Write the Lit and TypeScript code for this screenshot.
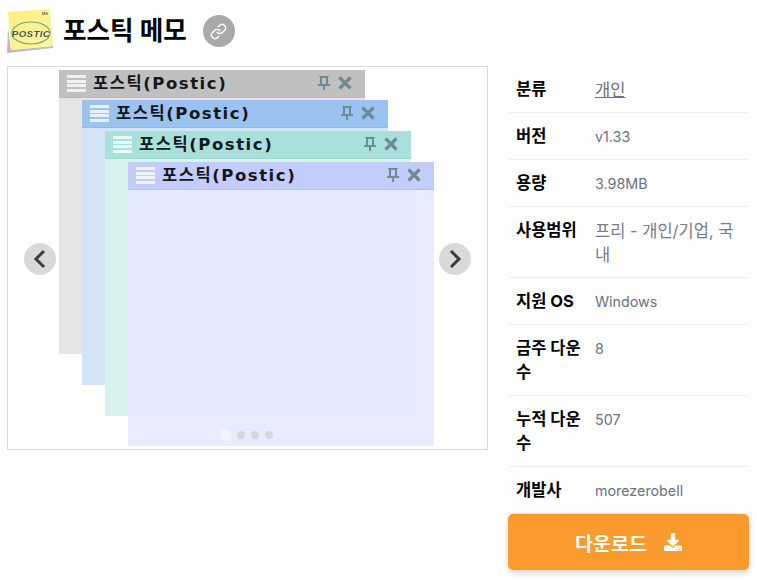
import { LitElement, html, css, svg } from "lit";
import { customElement } from "lit/decorators.js";

const windows = [
  { left: 51, top: 3, height: 284, bar: "#c0c0c0", edge: "#b9b9b9", body: "#e5e5e5" },
  { left: 74, top: 33, height: 285, bar: "#9ac3f0", edge: "#8cb8ea", body: "#d4e4f8" },
  { left: 97, top: 64, height: 285, bar: "#a8e0dc", edge: "#9ad8d2", body: "#d8f2ef" },
  { left: 120, top: 95, height: 284, bar: "#c2cdfb", edge: "#b3c0f6", body: "rgba(230,235,254,0.95)" },
];

const specs: { label: string; value: string; link?: boolean; ko?: boolean }[] = [
  { label: "분류", value: "개인", link: true, ko: true },
  { label: "버전", value: "v1.33" },
  { label: "용량", value: "3.98MB" },
  { label: "사용범위", value: "프리 - 개인/기업, 국내", ko: true },
  { label: "지원 OS", value: "Windows" },
  { label: "금주 다운수", value: "8" },
  { label: "누적 다운수", value: "507" },
  { label: "개발사", value: "morezerobell" },
];

const downloadIcon = svg`<path fill="currentColor" d="M216 0h80c13.3 0 24 10.7 24 24v168h87.7c17.8 0 26.7 21.5 14.1 34.1L269.7 378.3c-7.5 7.5-19.8 7.5-27.3 0L90.1 226.1c-12.6-12.6-3.7-34.1 14.1-34.1H192V24c0-13.3 10.7-24 24-24zm296 376v112c0 13.3-10.7 24-24 24H24c-13.3 0-24-10.7-24-24V376c0-13.3 10.7-24 24-24h146.7l49 49c20.1 20.1 52.5 20.1 72.6 0l49-49H488c13.3 0 24 10.7 24 24zm-124 88c0-11-9-20-20-20s-20 9-20 20 9 20 20 20 20-9 20-20zm64 0c0-11-9-20-20-20s-20 9-20 20 9 20 20 20 20-9 20-20z"/>`;

@customElement("app-root")
export class AppRoot extends LitElement {
  static styles = css`
    :host {
      display: block;
      height: 580px;
      overflow: hidden;
      background: #fff;
      font-family: Inter, "Noto Sans CJK KR", sans-serif;
      color: #000;
    }
    .page {
      padding: 8px 8px 0 7px;
    }
    .head {
      display: flex;
      align-items: center;
      height: 46px;
      margin-bottom: 12px;
    }
    .logo {
      width: 46px;
      height: 46px;
      margin-right: 10px;
      flex: none;
      filter: blur(0.4px);
    }
    h1 {
      margin: 0;
      font-size: 25.6px;
      font-weight: 700;
      line-height: 32px;
    }
    .share {
      width: 32px;
      height: 32px;
      margin-left: 16px;
      border-radius: 50%;
      background: #a9a9a9;
      color: #fff;
      display: flex;
      align-items: center;
      justify-content: center;
    }
    .share svg {
      width: 17px;
      height: 17px;
    }
    .main {
      display: grid;
      grid-template-columns: 481px 241px;
      column-gap: 20px;
      align-items: start;
    }
    .carousel {
      position: relative;
      height: 382px;
      border: 1px solid #d9d9d9;
      overflow: hidden;
      background: #fff;
    }
    .win {
      position: absolute;
      width: 306px;
      display: flex;
      flex-direction: column;
    }
    .bar {
      height: 28px;
      box-sizing: border-box;
      border-bottom: 1px solid;
      display: flex;
      align-items: center;
      padding: 0 13px 0 8px;
      flex: none;
    }
    .stripes {
      width: 19px;
      height: 18px;
      margin-right: 7px;
      background: repeating-linear-gradient(rgba(255, 255, 255, 0.78) 0 3px, transparent 3px 4.6px);
      flex: none;
    }
    .bar-title {
      font-family: "DejaVu Sans", "Noto Sans CJK KR", sans-serif;
      font-size: 16.5px;
      font-weight: 700;
      letter-spacing: 1.55px;
      line-height: 22px;
      color: #16161e;
      white-space: nowrap;
      flex: 1;
    }
    .bar svg {
      flex: none;
      color: #708a96;
      margin-bottom: 1px;
    }
    .pin {
      margin-right: 8px;
    }
    .body {
      flex: 1;
    }
    .nav {
      position: absolute;
      top: 176px;
      width: 32px;
      height: 32px;
      border-radius: 50%;
      background: #d9d9d9;
      color: #3c3c3c;
      display: flex;
      align-items: center;
      justify-content: center;
    }
    .prev {
      left: 16px;
    }
    .next {
      right: 16px;
    }
    .dots {
      position: absolute;
      left: 212px;
      bottom: 8px;
      display: flex;
      align-items: center;
      gap: 6px;
    }
    .dots i {
      width: 8px;
      height: 8px;
      border-radius: 50%;
      background: #d6d6dc;
    }
    .dots i.on {
      width: 12px;
      height: 12px;
      margin-right: -1px;
      background: #f4f6ff;
    }
    dl {
      margin: 0;
    }
    .row {
      display: grid;
      grid-template-columns: 72px 1fr;
      column-gap: 7px;
      padding: 11px 8px;
      border-bottom: 1px solid #eceef3;
      line-height: 24px;
    }
    .row dt {
      font-size: 16.5px;
      font-weight: 700;
      word-break: break-all;
    }
    .row dd {
      margin: 1px 0 -1px;
      font-size: 14.3px;
      color: #6b7280;
      word-break: break-all;
    }
    .row dd.ko {
      font-size: 16.5px;
      color: #777c86;
    }
    .row a {
      color: #6b7280;
      text-decoration: underline;
    }
    .download {
      height: 56px;
      border-radius: 5px;
      background: #fb9b2d;
      box-shadow: 0 3px 6px rgba(0, 0, 0, 0.18);
      color: #fff;
      font-size: 19.5px;
      font-weight: 700;
      display: flex;
      align-items: center;
      justify-content: center;
      gap: 17px;
    }
    .download svg {
      width: 18px;
      height: 18px;
    }
  `;

  renderWindow(w: (typeof windows)[number]) {
    return html`<div
      class="win"
      style="left:${w.left}px;top:${w.top}px;height:${w.height}px"
    >
      <div class="bar" style="background:${w.bar};border-color:${w.edge}">
        <span class="stripes"></span>
        <span class="bar-title">포스틱(Postic)</span>
        <svg class="pin" width="12" height="14" viewBox="0 0 12 14">
          <path fill="currentColor" fill-rule="evenodd" d="M1 0h10v1h-1v7h2v2H7v4H5v-4H0V8h2V1H1zM4 2h4v6H4z" />
        </svg>
        <svg width="14" height="14" viewBox="0 0 14 14">
          <path stroke="currentColor" stroke-width="3.2" d="M1.500 1.500l11 11M12.500 1.500l-11 11" fill="none" />
        </svg>
      </div>
      <div class="body" style="background:${w.body}"></div>
    </div>`;
  }

  render() {
    return html`<div class="page">
      <header class="head">
        <svg class="logo" viewBox="0 0 46 46">
          <defs>
            <linearGradient id="note" x1="0" y1="0" x2="1" y2="1">
              <stop offset="0" stop-color="#fbee7c" />
              <stop offset="1" stop-color="#faf5a8" />
            </linearGradient>
          </defs>
          <path d="M1 20l3 22 42-4v2L0 45z" fill="#8d9199" opacity="0.6" />
          <path d="M1 4L43 1l3 37-42 4z" fill="url(#note)" />
          <ellipse cx="24" cy="25" rx="19" ry="11" fill="none" stroke="#7ea27a" stroke-width="1.200" />
          <text x="24" y="28.500" text-anchor="middle" font-size="9.800" letter-spacing="0.300" font-weight="700" font-style="italic"
            font-family="Liberation Sans, sans-serif" fill="#4a5a58">POSTIC</text>
          <text x="35" y="7" font-size="4" font-weight="700"
            font-family="Liberation Sans, sans-serif" fill="#4d6a50">MS</text>
        </svg>
        <h1>포스틱 메모</h1>
        <span class="share">
          <svg viewBox="0 0 24 24" fill="none" stroke="currentColor" stroke-width="2" stroke-linecap="round" stroke-linejoin="round">
            <path d="M10 13a5 5 0 0 0 7.54.54l3-3a5 5 0 0 0-7.07-7.07l-1.72 1.71" />
            <path d="M14 11a5 5 0 0 0-7.54-.54l-3 3a5 5 0 0 0 7.07 7.07l1.71-1.71" />
          </svg>
        </span>
      </header>
      <div class="main">
        <div class="carousel">
          ${windows.map((w) => this.renderWindow(w))}
          <span class="nav prev">
            <svg width="14" height="20" viewBox="0 0 14 20">
              <path d="M11 2L3 10l8 8" fill="none" stroke="currentColor" stroke-width="3" />
            </svg>
          </span>
          <span class="nav next">
            <svg width="14" height="20" viewBox="0 0 14 20">
              <path d="M3 2l8 8-8 8" fill="none" stroke="currentColor" stroke-width="3" />
            </svg>
          </span>
          <div class="dots"><i class="on"></i><i></i><i></i><i></i></div>
        </div>
        <div>
          <dl>
            ${specs.map(
              (s) => html`<div class="row">
                <dt>${s.label}</dt>
                <dd class=${s.ko ? "ko" : ""}>${s.link ? html`<a>${s.value}</a>` : s.value}</dd>
              </div>`
            )}
          </dl>
          <div class="download">
            <span>다운로드</span>
            <svg viewBox="0 0 512 512">${downloadIcon}</svg>
          </div>
        </div>
      </div>
    </div>`;
  }
}
